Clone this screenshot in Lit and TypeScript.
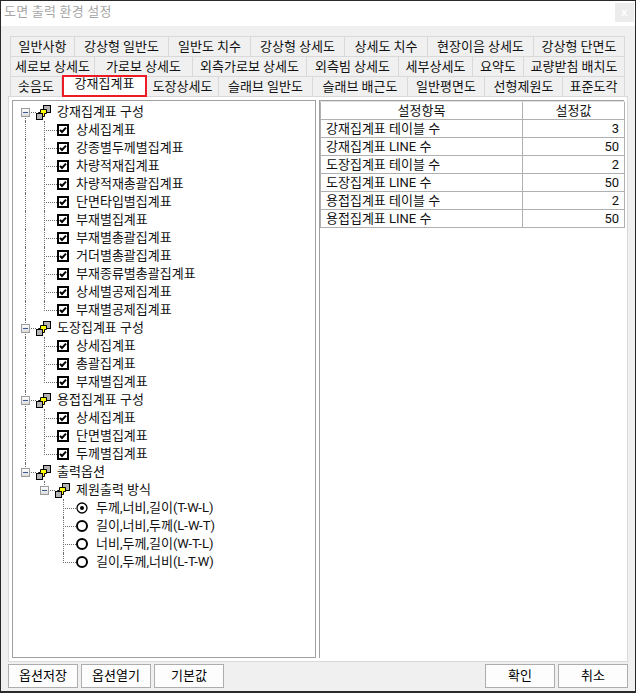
import { LitElement, html, css, svg } from "lit";
import { customElement } from "lit/decorators.js";

const TABS: [string, number, boolean?][][] = [
  [["일반사항", 65], ["강상형 일반도", 94], ["일반도 치수", 82], ["강상형 상세도", 94], ["상세도 치수", 83], ["현장이음 상세도", 106], ["강상형 단면도", 91]],
  [["세로보 상세도", 85], ["가로보 상세도", 98], ["외측가로보 상세도", 114], ["외측빔 상세도", 92], ["세부상세도", 74], ["요약도", 51], ["교량받침 배치도", 101]],
  [["솟음도", 52], ["강재집계표", 85, true], ["도장상세도", 72], ["슬래브 일반도", 94], ["슬래브 배근도", 95], ["일반평면도", 77], ["선형제원도", 78], ["표준도각", 62]],
];

type Row =
  | { k: "group"; t: string; v: "vlow" | "vfull" | "vup" }
  | { k: "check"; t: string; v: "vfull" | "none"; last?: boolean }
  | { k: "sub"; t: string }
  | { k: "radio"; t: string; on?: boolean; last?: boolean };

const checks = (names: string[]): Row[] =>
  names.map((t, i) => ({ k: "check", t, v: "vfull", last: i === names.length - 1 }));

const ROWS: Row[] = [
  { k: "group", t: "강재집계표 구성", v: "vlow" },
  ...checks(["상세집계표", "강종별두께별집계표", "차량적재집계표", "차량적재총괄집계표", "단면타입별집계표", "부재별집계표", "부재별총괄집계표", "거더별총괄집계표", "부재종류별총괄집계표", "상세별공제집계표", "부재별공제집계표"]),
  { k: "group", t: "도장집계표 구성", v: "vfull" },
  ...checks(["상세집계표", "총괄집계표", "부재별집계표"]),
  { k: "group", t: "용접집계표 구성", v: "vfull" },
  ...checks(["상세집계표", "단면별집계표", "두께별집계표"]),
  { k: "group", t: "출력옵션", v: "vup" },
  { k: "sub", t: "제원출력 방식" },
  { k: "radio", t: "두께,너비,길이(T-W-L)", on: true },
  { k: "radio", t: "길이,너비,두께(L-W-T)" },
  { k: "radio", t: "너비,두께,길이(W-T-L)" },
  { k: "radio", t: "길이,두께,너비(L-T-W)", last: true },
];

const TABLE: [string, string][] = [
  ["강재집계표 테이블 수", "3"],
  ["강재집계표 LINE 수", "50"],
  ["도장집계표 테이블 수", "2"],
  ["도장집계표 LINE 수", "50"],
  ["용접집계표 테이블 수", "2"],
  ["용접집계표 LINE 수", "50"],
];

const nodeIcon = () => html`<svg class="node" width="15" height="15" viewBox="0 0 15 15">
  ${svg`<rect x="7.5" y="0.5" width="7" height="7" fill="#b4b4b4" stroke="#000"/>
  <path d="M4.5 4.5h6v4h-2v3h-6v-4h2z" fill="#ffff00" stroke="#000"/>
  <rect x="0.5" y="8.5" width="6" height="6" fill="#b4b4b4" stroke="#000"/>`}
</svg>`;

const checkIcon = () => html`<svg class="box" width="12" height="12" viewBox="0 0 12 12">
  ${svg`<rect x="1" y="1" width="10" height="10" fill="#fff" stroke="#000" stroke-width="2"/>
  <path d="M3 5.8 5 8 9 3.6" fill="none" stroke="#000" stroke-width="2"/>`}
</svg>`;

const radioIcon = (on?: boolean) => html`<svg class="box radio" width="12" height="12" viewBox="0 0 12 12">
  ${on
    ? svg`<circle cx="6" cy="6" r="5" fill="#fff" stroke="#000" stroke-width="1.3"/><circle cx="6" cy="6" r="2" fill="#000"/>`
    : svg`<circle cx="6" cy="6" r="5" fill="#fff" stroke="#000" stroke-width="2"/>`}
</svg>`;

@customElement("app-root")
export class AppRoot extends LitElement {
  static styles = css`
    :host {
      display: block;
      width: 636px;
      height: 693px;
      font-family: "Roboto", "Noto Sans CJK KR", sans-serif;
      font-size: 13px;
      color: #111;
    }
    * { box-sizing: border-box; }
    .win {
      width: 636px;
      height: 693px;
      border: 1px solid #2a2a2a;
      border-bottom-width: 2px;
      background: #f0f0f0;
      display: flex;
      flex-direction: column;
    }
    .title {
      flex: none;
      height: 25px;
      background: #fff;
      display: flex;
      align-items: flex-start;
      justify-content: space-between;
      padding: 2px 1px 0 3px;
      color: #a6a6a6;
      letter-spacing: 0.2px;
      line-height: 18px;
    }
    .close {
      width: 19px;
      height: 19px;
      background: #ececec;
      color: #fff;
      font: bold 11px/19px "Liberation Sans", sans-serif;
      text-align: center;
    }
    .body {
      flex: 1;
      display: flex;
      flex-direction: column;
      padding: 10px 7px 0 7px;
      min-height: 0;
    }
    .tabrow {
      flex: none;
      height: 20px;
      display: flex;
      padding-left: 2px;
    }
    .tab {
      flex: none;
      height: 20px;
      border-top: 1px solid #d9d9d9;
      border-right: 1px solid #d9d9d9;
      display: flex;
      align-items: center;
      justify-content: center;
      white-space: nowrap;
      line-height: 18px;
    }
    .tab:first-child { border-left: 1px solid #d9d9d9; }
    .tab.active {
      background: #fff;
      border: 2px solid #ed1c24;
      height: 22px;
      margin-top: -1px;
      padding-bottom: 4px;
      position: relative;
    }
    .page {
      flex: none;
      height: 566px;
      background: #fff;
      border: 1px solid #d9d9d9;
      padding: 3px;
      display: flex;
      gap: 3px;
    }
    .tree {
      flex: none;
      width: 304px;
      border: 1px solid #a0a0a0;
      padding: 2px 0 0 3px;
    }
    .row {
      height: 18px;
      display: flex;
      align-items: center;
      white-space: nowrap;
    }
    .label { line-height: 16px; }
    .cell {
      position: relative;
      flex: none;
      height: 18px;
      display: flex;
      align-items: center;
    }
    .c19 { width: 19px; }
    .c20 { width: 20px; }
    .branch { width: 22px; }
    .vfull::before, .vlow::before, .vup::before, .ve::before {
      content: "";
      position: absolute;
      left: 9px;
      border-left: 1px dotted #6e6e6e;
    }
    .vfull::before { top: 0; bottom: 0; }
    .vlow::before { top: 9px; bottom: 0; }
    .vup::before, .ve::before { top: 0; height: 10px; }
    .h::after {
      content: "";
      position: absolute;
      left: 9px;
      right: 0;
      top: 9px;
      border-top: 1px dotted #6e6e6e;
    }
    .exp {
      position: relative;
      z-index: 1;
      width: 9px;
      height: 9px;
      margin-left: 5px;
      border: 1px solid #9c9c9c;
      background: linear-gradient(#fdfdfd, #dcdcdc);
      display: flex;
      align-items: center;
      justify-content: center;
    }
    .exp i {
      display: block;
      width: 5px;
      height: 1px;
      background: #3c5a8c;
    }
    .node { flex: none; margin: 1px 6px 0 0; display: block; }
    .box { flex: none; margin-right: 7px; display: block; }
    .radio { margin-right: 8px; }
    .right {
      flex: 1;
      border-top: 1px solid #a0a0a0;
      border-left: 1px solid #a0a0a0;
      min-width: 0;
    }
    .grid {
      width: 305px;
      display: grid;
      grid-template-columns: 203px 102px;
      grid-auto-rows: 18px;
      border-top: 1px solid #e0e0e0;
    }
    .c {
      border-bottom: 1px solid #b0b0b0;
      border-right: 1px solid #b0b0b0;
      line-height: 16px;
      white-space: nowrap;
      padding: 1px 5px 0;
    }
    .c:nth-child(2n+1) { border-left: 1px solid #b0b0b0; }
    .c.head { text-align: center; }
    .c.num { text-align: right; }
    .btns {
      flex: 1;
      display: flex;
      gap: 3px;
      padding-top: 2px;
    }
    .spacer { flex: 1; }
    .btn {
      flex: none;
      width: 70px;
      height: 24px;
      border: 1px solid #adadad;
      background: #fdfdfd;
      color: #000;
      display: flex;
      align-items: center;
      justify-content: center;
      line-height: 18px;
    }
  `;

  private renderRow(r: Row) {
    switch (r.k) {
      case "group":
        return html`<div class="row">
          <span class="cell c20 h ${r.v}"><span class="exp"><i></i></span></span>
          ${nodeIcon()}<span class="label">${r.t}</span>
        </div>`;
      case "check":
        return html`<div class="row">
          <span class="cell c19 vfull"></span>
          <span class="cell branch h ${r.last ? "ve" : "vfull"}"></span>
          ${checkIcon()}<span class="label">${r.t}</span>
        </div>`;
      case "sub":
        return html`<div class="row">
          <span class="cell c19"></span>
          <span class="cell c20 h ve"><span class="exp"><i></i></span></span>
          ${nodeIcon()}<span class="label">${r.t}</span>
        </div>`;
      case "radio":
        return html`<div class="row">
          <span class="cell c19"></span>
          <span class="cell c19"></span>
          <span class="cell branch h ${r.last ? "ve" : "vfull"}"></span>
          ${radioIcon(r.on)}<span class="label">${r.t}</span>
        </div>`;
    }
  }

  render() {
    return html`<div class="win">
      <div class="title"><span>도면 출력 환경 설정</span><span class="close">x</span></div>
      <div class="body">
        ${TABS.map(
          (row) => html`<div class="tabrow">
            ${row.map(
              ([t, w, active]) =>
                html`<div class="tab ${active ? "active" : ""}" style="width:${w}px">${t}</div>`
            )}
          </div>`
        )}
        <div class="page">
          <div class="tree">${ROWS.map((r) => this.renderRow(r))}</div>
          <div class="right">
            <div class="grid">
              <div class="c head">설정항목</div>
              <div class="c head">설정값</div>
              ${TABLE.map(
                ([a, b]) => html`<div class="c">${a}</div><div class="c num">${b}</div>`
              )}
            </div>
          </div>
        </div>
        <div class="btns">
          <div class="btn">옵션저장</div>
          <div class="btn">옵션열기</div>
          <div class="btn">기본값</div>
          <div class="spacer"></div>
          <div class="btn">확인</div>
          <div class="btn">취소</div>
        </div>
      </div>
    </div>`;
  }
}
